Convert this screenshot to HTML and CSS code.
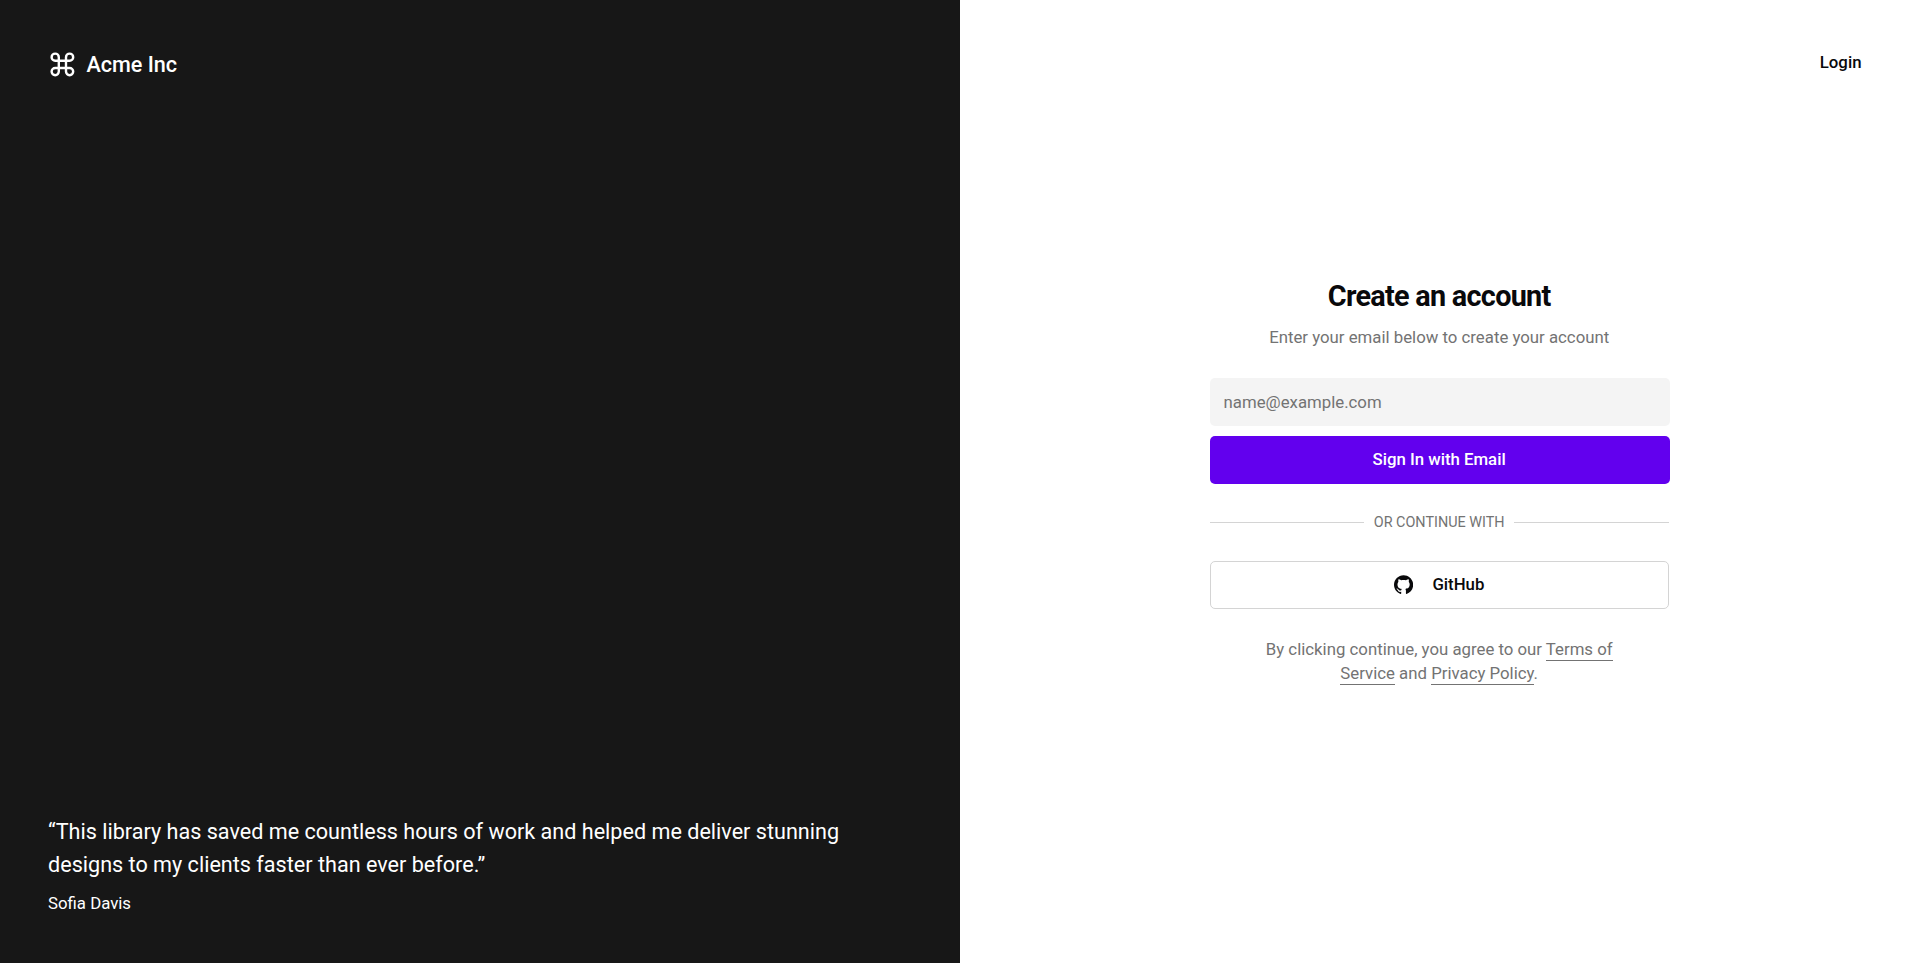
FILE: index.html
```html
<!DOCTYPE html>
<html lang="en">
<head>
<meta charset="utf-8">
<title>Create an account</title>
<link rel="stylesheet" href="styles.css">
</head>
<body>
<div class="page">
  <aside class="brand-panel">
    <div class="brand">
      <svg class="brand-icon" viewBox="0 0 24 24" fill="none" stroke="currentColor" stroke-width="2" stroke-linecap="round" stroke-linejoin="round"><path d="M15 6v12a3 3 0 1 0 3-3H6a3 3 0 1 0 3 3V6a3 3 0 1 0-3 3h12a3 3 0 1 0-3-3"/></svg>
      <span>Acme Inc</span>
    </div>
    <blockquote class="quote">
      <p class="quote-text">“This library has saved me countless hours of work and helped me deliver stunning designs to my clients faster than ever before.”</p>
      <footer class="quote-author">Sofia Davis</footer>
    </blockquote>
  </aside>
  <main class="form-panel">
    <header class="top"><a class="login" href="#">Login</a></header>
    <div class="content">
      <h1 class="title">Create an account</h1>
      <p class="subtitle">Enter your email below to create your account</p>
      <form class="form">
        <input class="email" type="email" placeholder="name@example.com">
        <button class="btn btn-primary" type="button">Sign In with Email</button>
      </form>
      <div class="divider"><span>OR CONTINUE WITH</span></div>
      <button class="btn btn-outline" type="button">
        <svg class="github" viewBox="0 0 24 24" fill="currentColor"><path d="M12 .297c-6.63 0-12 5.373-12 12 0 5.303 3.438 9.8 8.205 11.385.6.113.82-.258.82-.577 0-.285-.01-1.04-.015-2.04-3.338.724-4.042-1.61-4.042-1.61C4.422 18.07 3.633 17.7 3.633 17.7c-1.087-.744.084-.729.084-.729 1.205.084 1.838 1.236 1.838 1.236 1.07 1.835 2.809 1.305 3.495.998.108-.776.417-1.305.76-1.605-2.665-.3-5.466-1.332-5.466-5.93 0-1.31.465-2.38 1.235-3.22-.135-.303-.54-1.523.105-3.176 0 0 1.005-.322 3.3 1.23.96-.267 1.98-.399 3-.405 1.02.006 2.04.138 3 .405 2.28-1.552 3.285-1.23 3.285-1.23.645 1.653.24 2.873.12 3.176.765.84 1.23 1.91 1.23 3.22 0 4.61-2.805 5.625-5.475 5.92.42.36.81 1.096.81 2.22 0 1.606-.015 2.896-.015 3.286 0 .315.21.69.825.57C20.565 22.092 24 17.592 24 12.297c0-6.627-5.373-12-12-12"/></svg>
        <span class="btn-label">GitHub</span>
      </button>
      <p class="terms">By clicking continue, you agree to our <a href="#">Terms of Service</a> and <a href="#">Privacy Policy</a>.</p>
    </div>
  </main>
</div>
</body>
</html>
```
FILE: styles.css
```css
* { box-sizing: border-box; margin: 0; padding: 0; }
body { font-family: Roboto, sans-serif; font-size: 16px; line-height: 24px; color: #09090b; background: #fff; }
a { color: inherit; text-decoration: none; }
.page { display: grid; grid-template-columns: 1fr 1fr; height: 963px; }
.brand-panel { display: flex; flex-direction: column; justify-content: space-between; padding: 48px; background: #171717; color: #fff; }
.brand { display: flex; align-items: center; gap: 9.6px; font-size: 21.6px; font-weight: 500; line-height: 33.6px; }
.brand-icon { width: 28.8px; height: 28.8px; }
.quote-text { font-size: 21.6px; line-height: 33px; }
.quote-author { margin-top: 10px; font-size: 16.8px; line-height: 24px; }
.form-panel { display: grid; grid-template-rows: 125px 1fr 125px; }
.top { display: flex; justify-content: flex-end; padding: 50px 58.5px 0 0; }
.login { font-size: 16.8px; font-weight: 500; }
.content { width: 459.2px; margin-left: 249.6px; align-self: center; display: flex; flex-direction: column; }
.title { font-size: 28.8px; line-height: 38px; font-weight: 700; letter-spacing: -0.72px; text-align: center; }
.subtitle { margin-top: 10px; font-size: 16.8px; color: #737373; text-align: center; }
.form { display: grid; gap: 10px; margin-top: 29px; }
.email { width: 460px; height: 48px; border: 0; border-radius: 5px; background: #f4f4f4; padding: 0 14px; font: 400 16.8px Roboto, sans-serif; }
.email::placeholder { color: #737373; }
.btn { height: 48px; border: 0; border-radius: 5px; font: 500 16.8px Roboto, sans-serif; display: flex; align-items: center; justify-content: center; }
.btn-primary { width: 460px; padding: 0 1px 2px 0; background: #6200ee; color: #fff; }
.btn-outline { margin-top: 29px; padding-bottom: 1px; gap: 19.2px; background: #fff; border: 1px solid #d4d4d4; color: #09090b; }
.btn-label { padding-bottom: 1px; }
.github { width: 19.2px; height: 19.2px; }
.divider { display: flex; align-items: center; gap: 9.6px; margin-top: 29px; font-size: 14.4px; line-height: 19px; color: #737373; }
.divider::before, .divider::after { content: ""; flex: 1; height: 1px; background: #d4d4d4; }
.terms { margin-top: 28px; padding: 0 38px 1px; font-size: 16.8px; text-align: center; color: #737373; }
.terms a { padding-bottom: 1px; border-bottom: 1px solid #737373; }
```
